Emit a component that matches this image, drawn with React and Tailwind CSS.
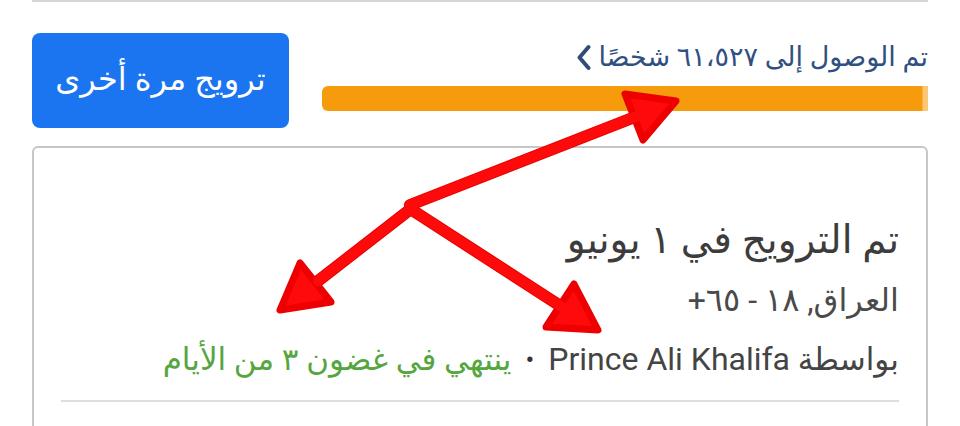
import React from "react";

const font = { fontFamily: 'Roboto, "DejaVu Sans", "Noto Sans", sans-serif' };

// red annotation arrows drawn over the page
const Arrows = () => (
  <svg className="absolute inset-0 pointer-events-none" width="960" height="426" viewBox="0 0 960 426">
    <g stroke="#e60000" strokeLinecap="round" strokeLinejoin="round">
      <line x1="410" y1="205" x2="640" y2="115" strokeWidth="12" />
      <line x1="412" y1="208" x2="318" y2="281" strokeWidth="12" />
      <line x1="412" y1="210" x2="562" y2="307" strokeWidth="12" />
    </g>
    <g fill="#ff0a0a" stroke="#ee0000" strokeWidth="7" strokeLinejoin="round">
      <polygon points="676,101 643,140 625,94" />
      <polygon points="280,310 331,302 300,263" />
      <polygon points="598,330 546,327 574,284" />
    </g>
    <g stroke="#ff0a0a" strokeLinecap="round">
      <line x1="410" y1="205" x2="640" y2="115" strokeWidth="10" />
      <line x1="412" y1="208" x2="318" y2="281" strokeWidth="10" />
      <line x1="412" y1="210" x2="562" y2="307" strokeWidth="10" />
    </g>
  </svg>
);

export default function App() {
  return (
    <div className="relative w-[960px] h-[426px] overflow-hidden bg-white px-8" style={font}>
      <div className="h-[2px] bg-[#d6d6d6]" />

      {/* promote again + reach */}
      <div className="mt-[31px] flex items-start gap-[33px]">
        <button className="w-[257px] h-[95px] shrink-0 rounded-lg bg-[#1b74f0] text-white text-[32px] flex items-center justify-center pb-1" dir="rtl">
          ترويج مرة أخرى
        </button>
        <div className="flex-1 flex flex-col">
          <div className="flex items-center justify-start gap-[7px] h-[44px] pt-1 text-[#2f5080] text-[27px]" dir="rtl">
            <span>تم الوصول إلى ٦١،٥٢٧ شخصًا</span>
            <svg width="15" height="27" viewBox="0 0 15 27">
              <polyline points="12.5,3 3.5,13.5 12.5,24" fill="none" stroke="#2f4e77" strokeWidth="4" strokeLinecap="round" strokeLinejoin="round" />
            </svg>
          </div>
          <div className="mt-[9px] h-[25px] rounded-l-md bg-gradient-to-l from-[#fbc774] from-[0.8%] via-[#f59b0c] via-[1%] to-[#f59b0c]" />
        </div>
      </div>

      {/* promotion card */}
      <div className="mt-[18px] h-[300px] border-2 border-[#c6c6c6] rounded-md px-[27px] pt-[68px]" dir="rtl">
        <div className="text-[39px] leading-[48px] text-[#3c3c3c]">تم الترويج في ١ يونيو</div>
        <div className="mt-[16px] text-[32px] leading-[40px] text-[#4a4a4a]">العراق, ١٨ - ٦٥+</div>
        <div className="mt-[19px] flex items-center gap-[14px] text-[31px] leading-[40px]">
          <span className="text-[#444]">بواسطة <span className="text-[32px]">Prince Ali Khalifa</span></span>
          <span className="text-[#333] text-[26px]">•</span>
          <span className="text-[#56a640]">ينتهي في غضون ٣ من الأيام</span>
        </div>
        <div className="mt-[20px] h-[2px] bg-[#dedede]" />
      </div>

      <Arrows />
    </div>
  );
}
